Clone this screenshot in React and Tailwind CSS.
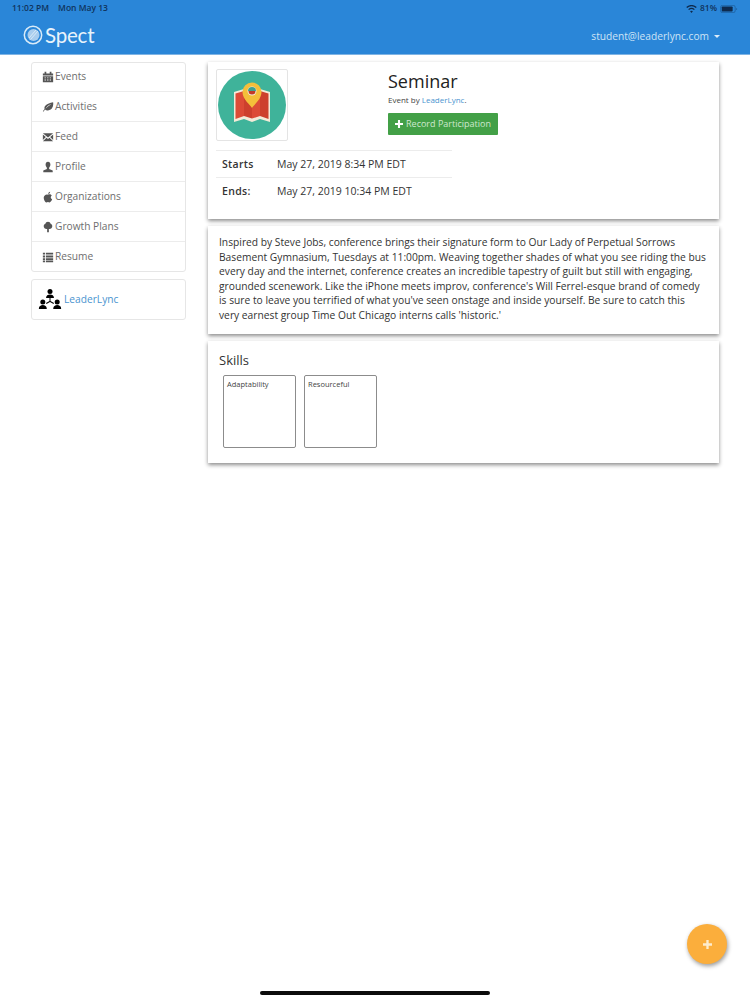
const FONT = { fontFamily: '"Open Sans", sans-serif' };

const icons = {
  events: (
    <path d="M1 3h12v10H1zM3 1h2v2H3zM9 1h2v2H9zM1 5.200v1h12v-1zM3 7.500h1.500v1H3zM6 7.500h1.500v1H6zM9 7.500h1.500v1H9zM3 10h1.500v1H3zM6 10h1.500v1H6zM9 10h1.500v1H9z" fillRule="evenodd" />
  ),
  activities: (
    <path d="M13 1.500c.6 4.500-1 9-6 9.500-1.500.1-2.700-.3-3.400-1L1.500 12.500 1 12l2-2.800C2.300 6 5 3 13 1.500zM11 3.500C8 4.500 5.500 6.500 4 9c2-2.200 4.500-4 7-5.500z" fillRule="evenodd" />
  ),
  feed: (
    <path d="M1 2.500h12L7 7.500zM1 4l3.500 3L1 10.500zM13 4v6.500L9.500 7zM1 12l4.300-4.200L7 9.200l1.700-1.400L13 12z" />
  ),
  profile: (
    <path d="M7 1c1.800 0 2.800 1.300 2.800 3.200 0 1.500-.7 3-1.500 3.600v1.400L12.500 11v2h-11v-2l4.200-1.800V7.800C4.900 7.200 4.200 5.700 4.200 4.200 4.200 2.300 5.200 1 7 1z" />
  ),
  organizations: (
    <path d="M7.200 3.600C7.300 2.200 8.200 1.200 9.500.9c0 1.400-.9 2.500-2.300 2.700zM7 4.300c1-.6 3.300-.9 4.400 1-1.800 1.200-1.500 3.700.4 4.400C11.200 11.500 10 13.300 8.800 13.300c-.8 0-1.100-.5-1.900-.5s-1.100.5-1.900.5C3.600 13.300 2 10.500 2 8c0-3.300 3.200-4.700 5-3.700z" />
  ),
  growth: (
    <path d="M7 1c1.600 0 2.800 1 3 2.300 1.200.4 2 1.500 2 2.700 0 1.800-1.500 3.200-3.300 3.200H8v3.800H6V9.200h-.7C3.500 9.200 2 7.800 2 6c0-1.200.8-2.300 2-2.700C4.200 2 5.400 1 7 1z" />
  ),
  resume: (
    <path d="M1 2h2.500v2.200H1zM4.500 2H13v2.200H4.500zM1 5.300h2.500v2.200H1zM4.500 5.300H13v2.200H4.500zM1 8.600h2.500v2.200H1zM4.500 8.600H13v2.200H4.500zM1 11.500h2.500v1.500H1zM4.500 11.500H13v1.500H4.500z" />
  ),
};

const navItems = [
  { label: "Events", icon: "events" },
  { label: "Activities", icon: "activities" },
  { label: "Feed", icon: "feed" },
  { label: "Profile", icon: "profile" },
  { label: "Organizations", icon: "organizations" },
  { label: "Growth Plans", icon: "growth" },
  { label: "Resume", icon: "resume" },
];

function NavIcon({ name }) {
  return (
    <svg viewBox="0 0 14 14" className="w-3 h-3 fill-[#555555] shrink-0">
      {icons[name]}
    </svg>
  );
}

function SpectLogo() {
  return (
    <svg viewBox="0 0 20 20" className="w-5 h-5">
      <circle cx="10" cy="10" r="8.700" fill="none" stroke="#d9ebf8" strokeWidth="1.500" />
      <circle cx="10.500" cy="10" r="6" fill="#a9cdee" />
      <path d="M6 13l7-8M7.500 14.500l7.500-8.500" stroke="#d9ebf8" strokeWidth="1" />
    </svg>
  );
}

function StatusBar() {
  return (
    <div className="h-4 pt-px flex items-center justify-between pl-3 pr-[12px] text-[8.500px] font-semibold text-[#10335c]">
      <div className="flex gap-[9px]">
        <span>11:02 PM</span>
        <span>Mon May 13</span>
      </div>
      <div className="flex items-center gap-[3px]">
        <svg viewBox="0 0 14 10" className="w-[11px] h-[8px] fill-[#0e2a4d]">
          <path d="M7 10L5.200 7.900a2.800 2.800 0 013.600 0zM3.900 6.400a4.800 4.800 0 016.200 0l1.100-1.200a6.500 6.500 0 00-8.400 0zM1.500 3.700a8.300 8.300 0 0111 0L13.700 2.400a10 10 0 00-13.400 0z" />
        </svg>
        <span>81%</span>
        <svg viewBox="0 0 24 11" className="w-[18px] h-[8px]">
          <rect x="0.500" y="0.500" width="20" height="10" rx="2.500" fill="none" stroke="#10335c" strokeOpacity="0.500" />
          <rect x="2" y="2" width="15" height="7" rx="1" fill="#0e2a4d" />
          <path d="M22 4v3c.8-.2 1.300-.8 1.300-1.500S22.800 4.200 22 4z" fill="#10335c" fillOpacity="0.500" />
        </svg>
      </div>
    </div>
  );
}

function Header() {
  return (
    <header className="h-[55px] bg-[#2a86d8] border-b border-[#7fb4e4]">
      <StatusBar />
      <div className="h-[38px] flex items-center justify-between pl-[23px] pr-[30px]">
        <div className="flex items-center gap-[2px]">
          <SpectLogo />
          <span className="text-[20.500px] text-[#e8f3fb] tracking-[-0.2px] leading-none" style={{ fontFamily: '"Lato", sans-serif' }}>Spect</span>
        </div>
        <div className="flex items-center gap-[5px] pt-[3px] text-[10.200px] text-[#cfe4f6]">
          <span>student@leaderlync.com</span>
          <span className="w-0 h-0 border-x-[3px] border-x-transparent border-t-[3px] border-t-[#dcecf9]" />
        </div>
      </div>
    </header>
  );
}

function Sidebar() {
  return (
    <aside className="w-[155px] ml-[31px] mr-[22px] shrink-0 flex flex-col gap-[7px]">
      <nav className="border border-[#e6e6e6] rounded-[3px] bg-white">
        {navItems.map((item, i) => (
          <a
            key={item.label}
            className={`flex items-center gap-px pl-[10px] text-[10.200px] text-[#6e6e6e] ${i > 0 ? "h-[30px] border-t border-[#ececec]" : "h-[28px]"}`}
          >
            <NavIcon name={item.icon} />
            {item.label}
          </a>
        ))}
      </nav>
      <div className="h-[41px] border border-[#e6e6e6] rounded-[3px] bg-white flex items-center gap-[2px] pl-[6px] text-[10.200px] text-[#4a94cf]">
        <svg viewBox="0 0 24 24" className="w-6 h-6 fill-black">
          <circle cx="12" cy="3.500" r="2.500" />
          <path d="M8 10c0-2.500 2-3.500 4-3.500s4 1 4 3.500z" />
          <circle cx="4.800" cy="14" r="2.500" />
          <path d="M.8 21c0-3 2-4 4-4s4 1 4 4z" />
          <circle cx="19.200" cy="14" r="2.500" />
          <path d="M15.200 21c0-3 2-4 4-4s4 1 4 4z" />
          <path d="M11.500 10h1v3l3.500 2-.5.900-3.500-2-3.500 2-.5-.9 3.500-2z" />
        </svg>
        <span>LeaderLync</span>
      </div>
    </aside>
  );
}

function EventImage() {
  return (
    <div className="w-[72px] h-[72px] border border-[#e4e4e4] rounded-[2px] flex items-center justify-center">
      <svg viewBox="0 0 68 68" className="w-[68px] h-[68px]">
        <circle cx="34" cy="34" r="34" fill="#3fb39a" />
        <path d="M16 21l10-3 8 3 8-3 10 3v30l-10-3-8 3-8-3-10 3z" fill="#f3ead8" />
        <path d="M17.500 22.500l8.500-2.500v25l-8.500 3z" fill="#dc4b36" />
        <path d="M26 20l8 2.500v25L26 45z" fill="#cd402d" />
        <path d="M34 22.500l8-2.500v25l-8 2.500z" fill="#dc4b36" />
        <path d="M42 20l8.500 2.500V48L42 45z" fill="#cd402d" />
        <path d="M34 37c-1.500-3-9.500-8.500-9.500-16a9.500 9.500 0 0119 0c0 7.500-8 13-9.500 16z" fill="#f4bf3a" />
        <circle cx="34" cy="20" r="4.500" fill="#f3ead8" />
        <path d="M30 20a4 4 0 018 0z" fill="#3fa08f" />
        <path d="M30.500 20h7a3.500 3.500 0 01-7 0z" fill="#c23a28" />
      </svg>
    </div>
  );
}

function Card({ className, children }) {
  return (
    <section className={`bg-white shadow-[0_2px_4px_rgba(0,0,0,0.45)] ${className}`}>
      {children}
    </section>
  );
}

function EventCard() {
  return (
    <Card className="h-[157px] pt-[7px] pl-[8px]">
      <div className="flex">
        <EventImage />
        <div className="ml-[100px]">
          <h1 className="text-[18px] leading-[24px] text-[#222222]">Seminar</h1>
          <p className="text-[8px] leading-[14px] text-[#444444]">
            Event by <span className="text-[#4a94cf]">LeaderLync</span>.
          </p>
          <button className="mt-[6px] w-[110px] h-[22px] bg-[#43a047] rounded-[1px] text-[9px] text-[#cfe8d0] flex items-center justify-center gap-[3px]">
            <svg viewBox="0 0 10 10" className="w-2 h-2 fill-white">
              <path d="M3.700 0h2.600v3.700H10v2.600H6.300V10H3.700V6.300H0V3.700h3.700z" />
            </svg>
            Record Participation
          </button>
        </div>
      </div>
      <div className="w-[236px] mt-[9px] text-[10.500px] text-[#333333]">
        <div className="h-[27px] pt-[2px] flex items-center border-t border-[#ececec] pl-[6px]">
          <span className="w-[55px] font-semibold tracking-[0.3px]">Starts</span>
          <span>May 27, 2019 8:34 PM EDT</span>
        </div>
        <div className="h-[27px] pt-[2px] flex items-center border-t border-[#ececec] pl-[6px]">
          <span className="w-[55px] font-semibold tracking-[0.3px]">Ends:</span>
          <span>May 27, 2019 10:34 PM EDT</span>
        </div>
      </div>
    </Card>
  );
}

function SkillBox({ label }) {
  return (
    <div className="w-[73px] h-[73px] border border-[#8c8c8c] rounded-[2px] px-[3px] py-[3px] text-[7.500px] leading-[11px] text-[#444444]">
      {label}
    </div>
  );
}

export default function App() {
  return (
    <div className="relative h-[1000px] bg-white overflow-hidden" style={FONT}>
      <Header />
      <div className="flex pt-[7px]">
        <Sidebar />
        <main className="w-[511px] flex flex-col gap-[7px]">
          <EventCard />
          <Card className="h-[108px] pt-[9px] pl-[11px]">
            <p className="w-[488px] text-[10.250px] leading-[14.600px] text-[#333333]">
              Inspired by Steve Jobs, conference brings their signature form to Our Lady of Perpetual Sorrows Basement Gymnasium, Tuesdays at 11:00pm. Weaving together shades of what you see riding the bus every day and the internet, conference creates an incredible tapestry of guilt but still with engaging, grounded scenework. Like the iPhone meets improv, conference's Will Ferrel-esque brand of comedy is sure to leave you terrified of what you've seen onstage and inside yourself. Be sure to catch this very earnest group Time Out Chicago interns calls 'historic.'
            </p>
          </Card>
          <Card className="h-[122px] pt-[10px] pl-[11px]">
            <h2 className="text-[13px] leading-[18px] text-[#333333]">Skills</h2>
            <div className="flex gap-2 mt-[6px] ml-[4px]">
              <SkillBox label="Adaptability" />
              <SkillBox label="Resourceful" />
            </div>
          </Card>
        </main>
      </div>
      <button className="absolute left-[687px] top-[924px] w-10 h-10 rounded-full bg-[#fbae3c] shadow-[1px_2px_4px_rgba(0,0,0,0.4)] flex items-center justify-center">
        <svg viewBox="0 0 10 10" className="w-[9px] h-[9px] fill-[#fdeccd]">
          <path d="M3.700 0h2.600v3.700H10v2.600H6.300V10H3.700V6.300H0V3.700h3.700z" />
        </svg>
      </button>
      <div className="absolute left-[260px] top-[991px] w-[230px] h-1 rounded-full bg-[#0c0c0c]" />
    </div>
  );
}
